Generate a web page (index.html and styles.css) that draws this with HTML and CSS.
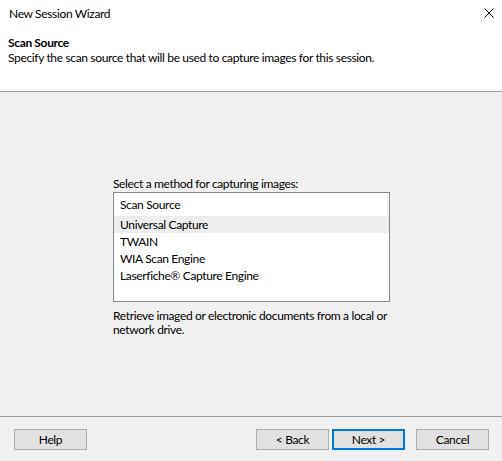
FILE: index.html
```html
<!DOCTYPE html>
<html>
<head>
<meta charset="utf-8">
<link rel="stylesheet" href="styles.css">
</head>
<body>
<div class="window">
  <div class="header">
    <div class="titlebar">
      <span class="title">New Session Wizard</span>
      <svg class="close" width="10" height="10" viewBox="0 0 10 10"><path d="M0.5 0.5 L9.5 9.5 M9.5 0.5 L0.5 9.5" stroke="#000" stroke-width="1" fill="none"/></svg>
    </div>
    <div class="page-title">Scan Source</div>
    <div class="page-desc">Specify the scan source that will be used to capture images for this session.</div>
  </div>
  <div class="content">
    <div class="panel">
      <div class="label">Select a method for capturing images:</div>
      <div class="listbox">
        <div class="list-header"><span>Scan Source</span></div>
        <div class="row selected">Universal Capture</div>
        <div class="row">TWAIN</div>
        <div class="row">WIA Scan Engine</div>
        <div class="row">Laserfiche® Capture Engine</div>
      </div>
      <div class="desc">Retrieve imaged or electronic documents from a local or network drive.</div>
    </div>
  </div>
  <div class="footer">
    <button class="btn">Help</button>
    <div class="spacer"></div>
    <button class="btn">&lt; Back</button>
    <button class="btn default">Next &gt;</button>
    <button class="btn cancel">Cancel</button>
  </div>
</div>
</body>
</html>
```
FILE: styles.css
```css
* { box-sizing: border-box; }
html, body { margin: 0; padding: 0; }
body {
  width: 502px;
  height: 461px;
  background: #f0f0f0;
  font-family: "Segoe UI", Lato, "Liberation Sans", sans-serif;
  font-size: 12px;
  letter-spacing: -0.35px;
  color: #000;
  overflow: hidden;
}
.window {
  width: 502px;
  height: 461px;
  display: flex;
  flex-direction: column;
}
.header {
  background: #fff;
  height: 92px;
  border-bottom: 1px solid #a0a0a0;
  padding-left: 8px;
}
.titlebar {
  height: 28px;
  display: flex;
  align-items: center;
  justify-content: space-between;
  padding-left: 1px;
  padding-right: 8px;
}
.title { line-height: 28px; }
.close { display: block; margin-top: -2px; }
.page-title {
  margin-top: 7px;
  font-weight: bold;
  line-height: 15px;
}
.page-desc {
  line-height: 16px;
}
.content {
  flex: 1;
  display: flex;
  justify-content: center;
  padding-top: 84px;
}
.panel {
  width: 277px;
  margin-left: 1px;
}
.label {
  line-height: 15px;
  margin-bottom: 1px;
}
.listbox {
  width: 277px;
  height: 110px;
  background: #fff;
  border: 1px solid #828790;
}
.list-header {
  height: 23px;
  width: 274px;
  border-right: 1px solid #e5e5e5;
  padding-left: 6px;
  line-height: 23px;
}
.row {
  height: 17px;
  line-height: 17px;
  padding-left: 6px;
  width: 275px;
}
.row.selected { background: #ededed; }
.desc {
  margin-top: 7px;
  line-height: 14px;
  width: 280px;
}
.footer {
  height: 45px;
  border-top: 1px solid #a0a0a0;
  display: flex;
  align-items: flex-start;
  padding: 12px 13px 0 14px;
}
.spacer { flex: 1; }
.btn {
  width: 73px;
  height: 21px;
  background: #e1e1e1;
  border: 1px solid #adadad;
  font-family: inherit;
  font-size: 12px;
  letter-spacing: -0.35px;
  color: #000;
  padding: 0;
  margin: 0;
  line-height: 19px;
}
.btn.default {
  border: 2px solid #0078d7;
  margin-left: 3px;
  line-height: 17px;
}
.btn.cancel { margin-left: 11px; }
```
